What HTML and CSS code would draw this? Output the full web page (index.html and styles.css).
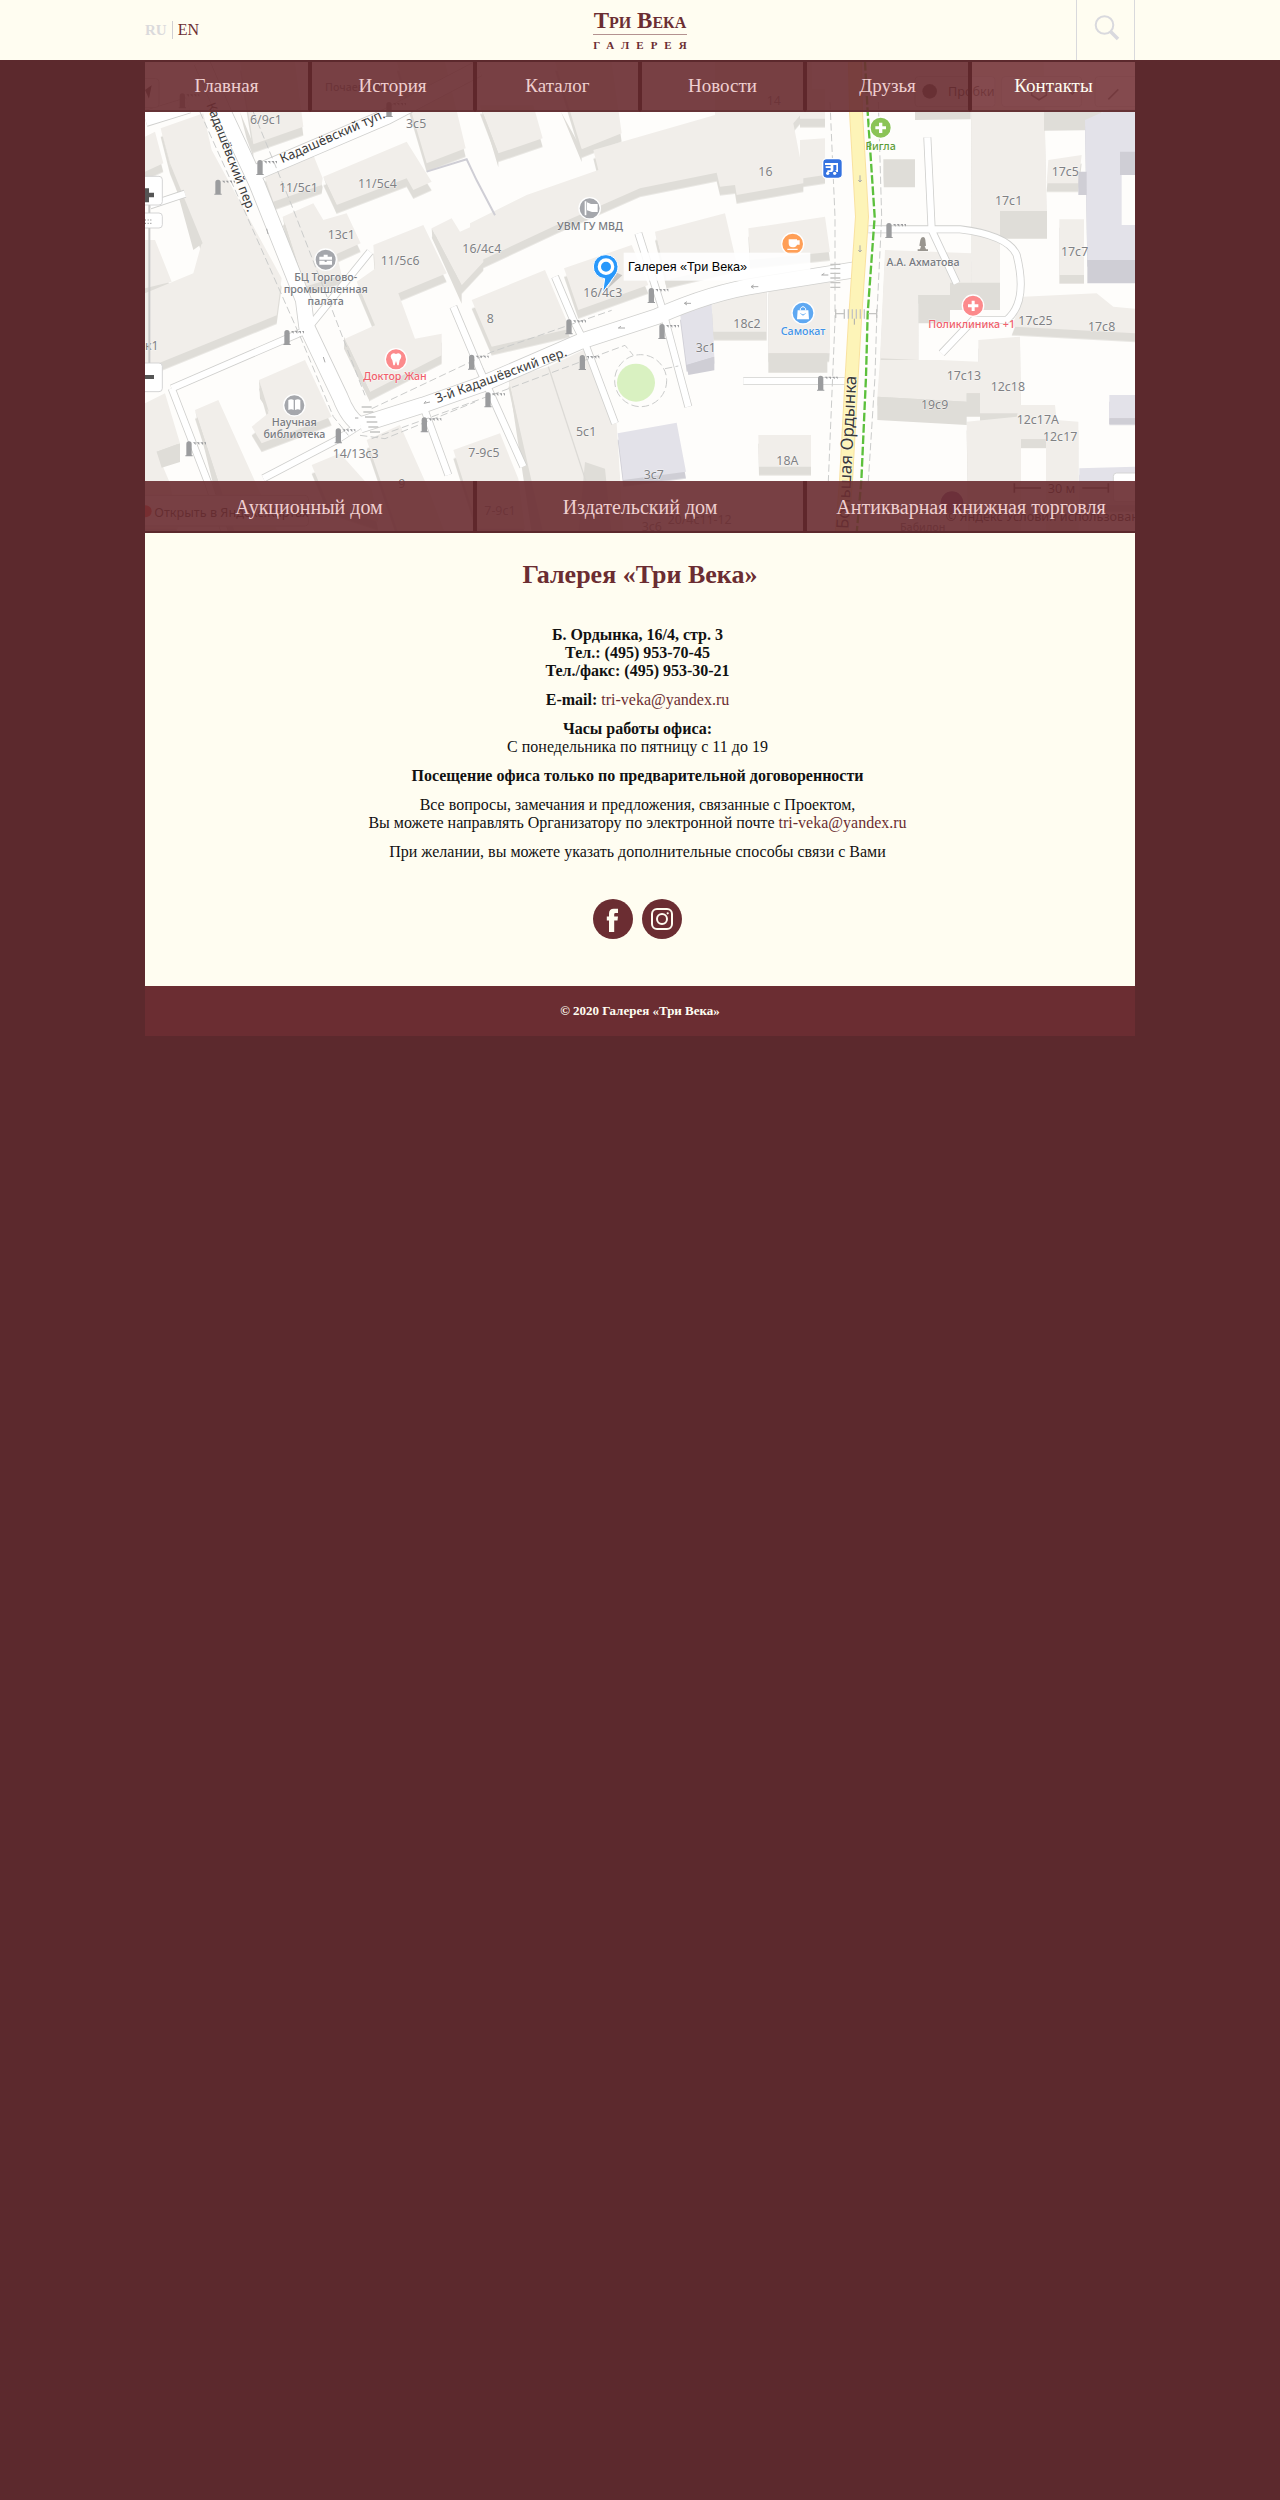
FILE: index.html
```html
<!DOCTYPE html>
<html lang="ru">
<head>
<meta charset="utf-8">
<meta name="viewport" content="width=device-width, initial-scale=1">
<title>Галерея «Три Века» — Контакты</title>
<link rel="stylesheet" href="styles.css">
</head>
<body>
<header class="header">
  <div class="header-inner">
    <div class="lang"><span class="lang-current">RU</span><a href="#en" class="lang-link">EN</a></div>
    <a href="#home" class="logo"><span class="logo-name">Три Века</span><span class="logo-sub">ГАЛЕРЕЯ</span></a>
    <button class="search" type="button" aria-label="Поиск">
      <svg width="26" height="26" viewBox="0 0 26 26" fill="none" stroke="#d9d9de"><circle cx="10.500" cy="10" r="8.800" stroke-width="2"/><path d="M16.500 16.500 24 24" stroke-width="3.500"/></svg>
    </button>
  </div>
</header>
<div class="page">
  <div class="hero">
    <svg class="map" viewBox="0 0 2970 1413" preserveAspectRatio="xMidYMid slice" role="img" aria-label="Карта проезда">
      <defs>
        <g id="bollard"><path d="M-8 40V6a8 8 0 0 1 16 0v34h3v3h-22v-3z" fill="#9b9c9e"/><path d="M12 1h8v8zM23 1h8v8zM34 1h8v8zM45 1h6v8z" fill="#9b9c9e"/></g>
        <g id="wide"><path d="M170 0 235 150 335 364 475 714 485 794 585 1004Q610 1070 645 1089"/><path d="M645 1089 835 1029 1005 969 1305 839 1535 764Q1700 690 1845 669L2125 624"/><path d="M0 170 130 130M315 339 725 164 1000 20"/></g>
        <g id="narrow"><path d="M15 430 120 395M80 979 485 804 675 569M80 979 190 1264 240 1413M355 1249 575 1134 645 1089M835 1034 910 1239M925 734 1005 924 1135 1214M1230 644 1285 774 1320 844 1410 1084M1480 514 1550 734 1630 1034M2170 502H2445Q2590 520 2615 579 2650 720 2585 774H2485L2390 874M2347 226 2360 504 2435 664M1795 957H2100"/></g>
      </defs>
      <rect width="2970" height="1413" class="ground"/>
      <g class="build">
        <path d="M285 0H450L475 194 325 247zM755 0H900L962 259 845 304zM47 199 175 154 200 264 320 484 410 649 395 760 0 920V694L145 634 170 544 75 310zM0 224 30 209 55 304 0 329zM0 534H30L80 659 0 679z"/>
        <path d="M355 334 505 279 533 349 530 369 385 419zM535 344 785 239 860 359 805 384 785 349 575 429zM413 464 505 424 535 474 605 454 647 544 575 576 590 640 480 674zM685 549 835 489 905 634 760 694 810 830 890 815 890 880 675 990 600 830 690 790 635 659 690 620zM860 499 920 469 945 509 1010 480 1015 600 950 670z"/>
        <path d="M1005 130H1165L1193 229 1060 274zM1230 0H1400L1430 214 1310 262zM975 594V484L1145 399 1360 324 1345 264 1710 159V0H2000V120L1945 184 1975 339 1975 364 1775 399 1770 369 1725 374 1715 332 1485 379 1235 489 990 604zM980 714 1200 624 1275 800 1040 854zM1257 619 1460 549 1510 669 1300 744zM1530 509 1740 454 1775 604 1565 654zM1810 499 2040 464 2055 570 1815 594zM1700 729 1865 664V809H1705z"/>
        <path d="M1965 80H2040V170H1965zM1965 234 2040 229V339L1965 350z"/>
        <path d="M0 1024 60 994 105 1144 35 1169 75 1264 100 1400H0zM150 1044 220 1014 400 1413H270zM342 954 480 894 560 1064 350 1144 320 1094 370 1054zM665 1134 765 1089 850 1280 900 1413H760zM500 1209 585 1174 680 1280 700 1380 550 1330zM925 1164 1065 1114 1120 1250 1140 1400H1000z"/>
        <path d="M1090 949 1210 914 1315 864 1415 1084 1435 1413H1190zM1840 1119H1998V1214H1842zM2710 294 2810 279 2800 364H2705zM2743 472H2817V639H2743zM2220 564 2480 574V670H2415V699H2320V894L2205 889zM2635 704 2855 694 2905 734 2970 740V814L2600 794z"/>
        <path d="M1870 670 2055 640V874H1870zM2205 894H2315L2385 894 2500 899V834L2625 824 2628 1054H2505V994H2465V1019L2197 1004zM2465 1079 2615 1064 2625 1029H2730L2735 1074 2800 1079V1413H2703V1132H2628V1413H2470z"/>
        <path d="M2478 0H2696L2705 449H2565V664H2480z"/>
      </g>
      <g class="side">
        <path d="M47 199 75 310 145 564 173 544 75 304zM285 150 325 247V286L305 230zM1005 130 1060 274V316zM1248 150 1310 262V300zM535 344 575 429V455zM413 464 480 674 510 740 440 600zM860 499 950 670V725L862 530zM342 954 372 1050 345 1010zM150 1044 270 1413H240zM597 824 675 990V1020L597 860zM1090 949 1195 1413 1160 1413zM1530 509 1565 654V680zM2310 150H2477V172L2310 174zM2215 292H2310V376H2215zM2565 447H2706V530H2565zM2697 150H2870V204L2697 206zM2415 662H2565V744H2415V784H2320V699H2415zM2197 1004 2465 1019V1089L2197 1074zM1870 874H2047V932H1870zM2465 994H2505V1064H2465zM2628 1132H2703V1158H2628zM35 1169 105 1144V1200L50 1217zM1320 1200 1380 1220 1400 1413H1300z"/>
        <path d="M845 329 965 292 995 355 1050 460" fill="none" stroke="#cfced5" stroke-width="6"/><path d="M1210 914 1330 1280" fill="none" stroke="#dcdad6" stroke-width="4"/>
      </g>
      <g class="lilac"><path d="M1605 754 1700 726 1708 884 1625 909zM1418 1114 1595 1082 1623 1229 1435 1254zM2820 174 2895 140H2970V594H2827zM2893 999H2970V1069H2893zM2803 1219 2970 1214V1330H2803z"/></g>
      <path d="M2827 594H2970V664H2827zM2925 269H2970V339H2925zM2800 329H2825V399H2800zM2893 1069H2970V1086H2893zM1625 909 1708 884V925L1630 939z" fill="#cfced5"/>
      <path d="M2930 339H2970V489H2930z" class="ground"/>
      <path d="M2130 0 2133 150 2151 464 2130 774 2120 944 2103 1257 2090 1413" fill="none" stroke="#fefdfb" stroke-width="140"/>
      <use href="#narrow" class="narrow-edge"/><use href="#wide" class="wide-edge"/><use href="#narrow" class="narrow-fill"/><use href="#wide" class="wide-fill"/>
      <g class="dashed">
        <path d="M165 150 300 450 470 834 565 1064 610 1120M325 150 440 430 560 740 660 1000M680 1040 1040 870 1400 745M680 1130 1010 1010 1440 850 1465 880M2055 120 2070 464V774L2050 1257M2200 120 2210 464 2195 774 2190 944 2170 1257M645 1120 720 1130 990 1020"/>
        <circle cx="1487" cy="956" r="78"/><path d="M1560 920 1600 912"/>
      </g>
      <circle cx="1473" cy="962" r="57" fill="#d9f1c1"/>
      <path d="M2130 0 2133 150 2151 464 2130 774 2120 944 2103 1257 2090 1413" fill="none" stroke="#f9e2a0" stroke-width="42"/>
      <path d="M2130 0 2133 150 2151 464 2130 774 2120 944 2103 1257 2090 1413" fill="none" stroke="#fdf4b8" stroke-width="36"/>
      <path d="M2160 0 2168 150 2189 464 2168 754 2163 944 2149 1257 2135 1413" fill="none" stroke="#5cc03c" stroke-width="7" stroke-dasharray="26 8"/>
      <path d="M2056 607h30M2056 620h30M2056 634h30M2056 648h30M2056 662h30M2056 676h30M650 1035h30M655 1050h30M660 1065h32M665 1080h32M670 1095h30M675 1110h30M2072 755h25M2072 742v26M2170 755h25M2195 742v26M2098 742v28M2110 742v28M2122 742v28M2134 742v28M2146 742v28M2158 742v28" stroke="#c4c4c2" stroke-width="4" fill="none"/>
      <g stroke="#aaa" stroke-width="3" fill="none"><path d="M2145 340v20l-5-6m5 6 5-6M2145 550v20l-5-6m5 6 5-6M2128 770v18M1840 674h-22l8-5m-8 5 8 5M1638 724h-20l8-5m-8 5 8 5M2050 639h-20l8-5M1440 798h-20l8-5M855 1020l-18 4 6-7M365 500l4 16M535 885l5 16M640 1068h-10"/></g>
      <g>
        <use href="#bollard" x="345" y="296"/><use href="#bollard" x="219" y="355"/><use href="#bollard" x="1519" y="680"/><use href="#bollard" x="2232" y="485"/><use href="#bollard" x="426" y="806"/><use href="#bollard" x="132" y="1140"/><use href="#bollard" x="580" y="1101"/><use href="#bollard" x="838" y="1068"/><use href="#bollard" x="980" y="880"/><use href="#bollard" x="1272" y="774"/><use href="#bollard" x="1551" y="788"/><use href="#bollard" x="1312" y="881"/><use href="#bollard" x="1029" y="993"/><use href="#bollard" x="2027" y="943"/><use href="#bollard" x="732" y="122"/><use href="#bollard" x="112" y="96"/>
      </g>
      <g class="num">
        <text x="315" y="186">6/9с1</text><text x="783" y="198">3с5</text><text x="402" y="390">11/5с1</text><text x="639" y="377">11/5с4</text><text x="548" y="531">13с1</text><text x="707" y="609">11/5с6</text><text x="952" y="572">16/4с4</text><text x="1840" y="343">16</text><text x="1315" y="704">16/4с3</text><text x="1025" y="782">8</text><text x="1765" y="798">18с2</text><text x="1652" y="871">3с1</text><text x="1293" y="1122">5с1</text><text x="1496" y="1251">3с7</text><text x="1894" y="1210">18А</text><text x="563" y="1188">14/13с3</text><text x="970" y="1185">7-9с5</text><text x="2720" y="342">17с5</text><text x="2550" y="430">17с1</text><text x="2748" y="581">17с7</text><text x="2620" y="789">17с25</text><text x="2829" y="808">17с8</text><text x="2405" y="955">17с13</text><text x="2537" y="986">12с18</text><text x="2328" y="1040">19с9</text><text x="2615" y="1087">12с17А</text><text x="2694" y="1138">12с17</text><text x="0" y="864">к1</text><text x="760" y="1278">9</text><text x="1018" y="1360">7-9с1</text><text x="1490" y="1408">3с6</text><text x="1568" y="1386">20/4с11-12</text><text x="1865" y="130">14</text>
      </g>
      <g class="street">
        <text transform="translate(184 128) rotate(69)">Кадашёвский пер.</text>
        <text transform="translate(412 304) rotate(-24)">Кадашёвский туп.</text>
        <text transform="translate(877 1023) rotate(-20)">3-й Кадашёвский пер.</text>
        <text class="avenue" transform="translate(2110 1402) rotate(-87)">Большая Ордынка</text>
      </g>
      <g class="poi">
        <text x="542" y="657">БЦ Торгово-</text><text x="542" y="693">промышленная</text><text x="542" y="730">палата</text>
        <text x="1335" y="505">УВМ ГУ МВД</text><text x="448" y="1093">Научная</text><text x="448" y="1129">библиотека</text><text x="2334" y="611">А.А. Ахматова</text>
        <text x="750" y="954" class="red">Доктор Жан</text><text x="2480" y="797" class="red">Поликлиника +1</text><text x="1974" y="818" class="blue">Самокат</text><text x="2207" y="263" class="green">Ригла</text><text x="641" y="86">Почаевского</text><text x="2333" y="1408">Бабилон</text>
      </g>
      <g class="pins" stroke="#fff" stroke-width="4">
        <circle cx="542" cy="593" r="32" fill="#a5a7ac"/><circle cx="1334" cy="439" r="32" fill="#a5a7ac"/><circle cx="448" cy="1030" r="32" fill="#a5a7ac"/><circle cx="753" cy="892" r="32" fill="#fc8a8c"/><circle cx="2484" cy="731" r="32" fill="#fc8a8c"/><circle cx="2207" cy="197" r="32" fill="#8bc457"/><circle cx="1943" cy="546" r="33" fill="#ff9f57"/><circle cx="1974" cy="753" r="33" fill="#5ea8f2"/><rect x="2033" y="290" width="59" height="59" rx="12" fill="#3472e0"/><circle cx="2421" cy="1322" r="36" fill="#77508f"/>
      </g>
      <g fill="#fff">
        <path d="M523 584h13v-6h12v6h13v9h-38zM523 596h16v4h6v-4h16v12h-38zM1319 418h5v42h-5zM1326 421l12 5h20v24h-17l-15-5zM430 1014q9-4 16 0v30q-7-4-16 0zM450 1014q9-4 16 0v30q-7-4-16 0zM738 879q5-9 15-3 10-6 15 3 3 8-4 16l-3 15h-4l-4-13-4 13h-4l-3-15q-7-8-4-16zM2480 716h9v11h11v9h-11v11h-9v-11h-11v-9h11zM2202 182h10v11h11v9h-11v11h-10v-11h-11v-9h11zM1931 532h25v3h8v13h-8q-3 8-13 8-12 0-12-12zM1927 560h31v4h-31zM1958 745h32l2 27h-36z"/>
        <path d="M1966 745v-5q8-12 16 0v5" fill="none" stroke="#fff" stroke-width="3"/><path d="M1967 754q7 10 14 0" fill="none" stroke="#5ea8f2" stroke-width="3"/>
        <path d="M2040 303h39v27h-5a6 6 0 0 0-12 0h-15v-5h10v-7h-15v-5h15v-4h-17z"/><circle cx="2048" cy="334" r="5"/><circle cx="2069" cy="334" r="5"/><path d="M2065 309h9v15h-9z" fill="#3472e0"/>
      </g>
      <path d="M2318 567h31v-5h-6l-4-9 4-2-2-17q-1-9-7-9t-8 9l-3 17 5 2-3 9h-7z" fill="#99958f"/>
      <path d="M1386 682 1432 640 1415 632z" fill="#777" opacity=".35"/>
      <rect x="1436" y="572" width="560" height="84" fill="#fff" opacity=".88"/>
      <path d="M1383 578a36 36 0 0 1 36 36c0 22-14 30-22 45l-24 32 6-41a36 36 0 0 1 4-72z" fill="#2898fb" stroke="#fff" stroke-width="3"/><circle cx="1383" cy="614" r="20" fill="none" stroke="#fff" stroke-width="10"/>
      <text x="1449" y="627" class="place">Галерея «Три Века»</text>
      <g class="ctl"><rect x="-40" y="343" width="92" height="86" rx="10"/><rect x="-40" y="453" width="92" height="45" rx="10"/><rect x="-40" y="903" width="92" height="86" rx="10"/><rect x="2905" y="1233" width="100" height="86" rx="10"/><rect x="-40" y="50" width="82" height="86" rx="10"/><rect x="2310" y="44" width="240" height="90" rx="10"/><rect x="2570" y="44" width="240" height="90" rx="10"/><rect x="2850" y="44" width="150" height="90" rx="10"/><rect x="-40" y="1300" width="530" height="92" rx="10"/></g>
      <path d="M0 379h12v13h15v14H12v15H0zM0 939h27v12H0z" fill="#555"/><path d="M0 474h22M0 484h22" stroke="#777" stroke-width="3" stroke-dasharray="3 5"/><path d="M13 429v24M13 498v405" stroke="#c9c9c9" stroke-width="6"/>
      <g class="control-text"><text x="2409" y="103">Пробки</text><text x="28" y="1366">Открыть в Яндекс.Картах</text><text x="2402" y="1376">© Яндекс Условия использования</text><text x="2708" y="1293">30 м</text></g>
      <circle cx="2354" cy="88" r="22" fill="#555"/><path d="M2608 1264v28M2608 1278h80M2812 1278h78M2890 1264v28M2660 74l22-13 22 13v26l-22 13-22-13zM2770 84l12 12 22-24M2890 112l30-30" fill="none" stroke="#555" stroke-width="5"/><circle cx="2" cy="1348" r="18" fill="#f43d35"/><path d="M0 84 20 70 12 110z" fill="#444"/>
    </svg>
    <nav class="bar bar-top">
      <a href="#home">Главная</a><a href="#history">История</a><a href="#catalog">Каталог</a><a href="#news">Новости</a><a href="#friends">Друзья</a><a href="#contacts" class="active">Контакты</a>
    </nav>
    <nav class="bar bar-bottom">
      <a href="#auction">Аукционный дом</a><a href="#publishing">Издательский дом</a><a href="#books">Антикварная книжная торговля</a>
    </nav>
  </div>
  <main class="content">
    <h1>Галерея «Три Века»</h1>
    <div class="details">
      <p><b>Б. Ордынка, 16/4, стр. 3<br>Тел.: (495) 953-70-45<br>Тел./факс: (495) 953-30-21</b></p>
      <p><b>E-mail:</b> <a href="mailto:tri-veka@yandex.ru">tri-veka@yandex.ru</a></p>
      <p><b>Часы работы офиса:</b><br>С понедельника по пятницу с 11 до 19</p>
      <p><b>Посещение офиса только по предварительной договоренности</b></p>
      <p>Все вопросы, замечания и предложения, связанные с Проектом,<br>Вы можете направлять Организатору по электронной почте <a href="mailto:tri-veka@yandex.ru">tri-veka@yandex.ru</a></p>
      <p>При желании, вы можете указать дополнительные способы связи с Вами</p>
      <div class="social">
        <a href="#facebook" aria-label="Facebook"><svg width="40" height="40" viewBox="0 0 40 40"><path d="M16 33V21.500h-2.200V17.500H16v-3q0-4.800 4.800-4.800H25v4.200h-2.500q-1.300 0-1.300 1.300v2.300H25l-.5 4h-3.300V33z" fill="#fffdf1"/></svg></a>
        <a href="#instagram" aria-label="Instagram"><svg width="40" height="40" viewBox="0 0 40 40" fill="none" stroke="#fffdf1" stroke-width="2"><rect x="10" y="10" width="20" height="20" rx="5"/><circle cx="20" cy="20" r="5"/><circle cx="25.700" cy="14.300" r="1.100" fill="#fffdf1" stroke="none"/></svg></a>
      </div>
    </div>
  </main>
  <footer class="footer">© 2020 Галерея «Три Века»</footer>
</div>
</body>
</html>
```
FILE: styles.css
```css
* { box-sizing: border-box; }
body { margin: 0; background: #5c292d; color: #111; font: 16px/18px "Liberation Serif", "Times New Roman", serif; }
a { color: #6b2d32; text-decoration: none; }

.header { background: #fffdf1; }
.header-inner { display: grid; grid-template-columns: 1fr auto 1fr; align-items: center; max-width: 990px; height: 60px; margin: 0 auto; }
.lang { display: flex; color: #dbdadc; }
.lang-current { padding-right: 5px; border-right: 1px solid #d0cfd3; font-weight: bold; font-size: 15px; }
.lang-link { padding-left: 5px; }
.logo { display: flex; flex-direction: column; align-items: stretch; padding-top: 2px; }
.logo-name { padding-bottom: 2px; border-bottom: 1px solid #b39290; font-weight: bold; font-size: 23px; line-height: 22px; font-variant: small-caps; text-align: center; }
.logo-sub { display: block; padding-top: 3px; margin-right: -7px; font-size: 11px; line-height: 14px; font-weight: bold; letter-spacing: 7px; }
.search { display: flex; align-items: center; justify-content: center; justify-self: end; width: 59px; height: 60px; padding: 0 0 4px 2px; border: solid #d9d9dc; border-width: 0 1px; background: none; cursor: pointer; }

.page { max-width: 990px; margin: 0 auto; }
.hero { position: relative; padding-top: 2px; overflow: hidden; background: #5c292d; }
.bar { position: absolute; left: 0; right: 0; display: grid; }
.bar-top { top: 2px; grid-template-columns: repeat(6, 1fr); }
.bar-bottom { bottom: 0; grid-template-columns: repeat(3, 1fr); }
.bar a { display: flex; align-items: center; justify-content: center; height: 50px; border: solid #5f272b; border-width: 0 2px; background: rgba(107, 45, 50, .91); background-clip: padding-box; color: #efcfd0; font-size: 19px; }
.bar a:first-child { border-left: 0; }
.bar a:last-child { border-right: 0; }
.bar-top a { border-bottom: 2px solid #663336; }
.bar-bottom a { height: 52px; padding-top: 2px; border-bottom: 2px solid #5c292d; font-size: 20px; }
.bar .active { background-color: rgba(120, 56, 61, .91); color: #fffdf1; }

.map { display: block; width: 100%; height: 471px; }
.ground { fill: #fefdfb; }
.build { fill: #f1eeea; filter: drop-shadow(0 26px 0 #dfddd8); }
.side { fill: #dfddd8; }
.lilac { fill: #e3e2e9; filter: drop-shadow(0 20px 0 #cfced5); }
.narrow-edge, .wide-edge, .narrow-fill, .wide-fill { fill: none; stroke-linejoin: round; }
.narrow-edge { stroke: #d0d0ce; stroke-width: 24px; }
.narrow-fill { stroke: #fff; stroke-width: 19px; }
.wide-edge { stroke: #d0d0ce; stroke-width: 50px; }
.wide-fill { stroke: #fff; stroke-width: 45px; }
.dashed { fill: none; stroke: #cbcccb; stroke-width: 3px; stroke-dasharray: 22px 10px; }
.num, .street, .poi, .control-text { font-family: "Noto Sans", "Open Sans", sans-serif; stroke: #fff; stroke-opacity: .6; stroke-width: 3px; paint-order: stroke; }
.num { fill: #808184; font-size: 37px; }
.street { fill: #3a3a3a; font-size: 39px; }
.avenue { font-size: 51px; }
.poi { fill: #777a80; font-size: 32px; font-weight: 500; text-anchor: middle; }
.red { fill: #f0606c; }
.blue { fill: #3f93e8; }
.green { fill: #5b9c35; }
.place { font: 38px "Liberation Sans", Arial, sans-serif; fill: #000; }
.ctl { fill: #fff; stroke: #d5d5d5; stroke-width: 3px; }
.control-text { fill: #333; font-size: 38px; }

.content { display: flow-root; padding: 0 16px 47px; background: #fffdf1; text-align: center; }
h1 { margin: 26px 0 35px; color: #6b2d32; font-weight: bold; font-size: 26px; line-height: 32px; }
.details { padding-right: 5px; }
.content p { margin: 0 0 11px; }
.social { display: flex; justify-content: center; gap: 9px; margin-top: 38px; }
.social a { display: block; width: 40px; height: 40px; border-radius: 50%; background: #6b2d32; }
.social svg { display: block; }
.footer { padding: 16px; background: #6b2d32; color: #fffdf1; font-weight: bold; font-size: 13px; text-align: center; }
```
